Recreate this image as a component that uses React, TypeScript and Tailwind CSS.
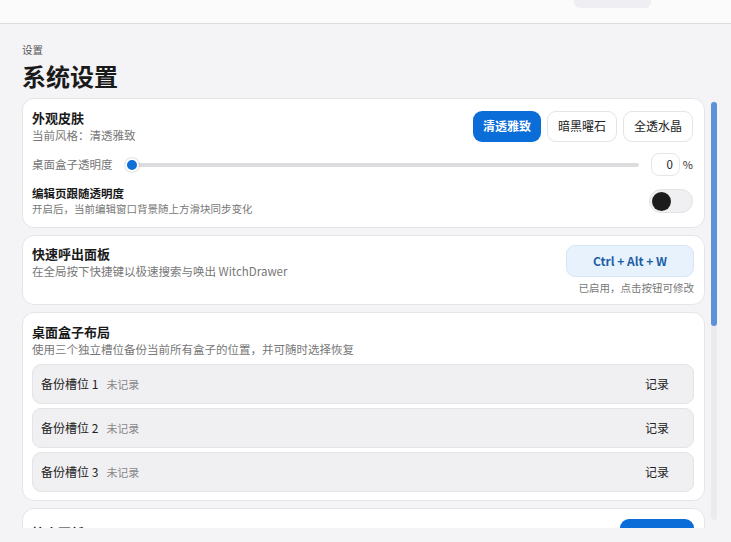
import React from "react";

const font = { fontFamily: '"Noto Sans CJK SC", "Noto Sans", sans-serif' };

function SkinButton({ label, active }: { label: string; active?: boolean }) {
  return (
    <button
      className={
        active
          ? "h-[31px] px-[10px] rounded-[9px] bg-[#0b6dd7] text-white text-[12px] font-bold leading-none"
          : "h-[31px] px-[10px] rounded-[9px] bg-white border border-[#e4e4e7] text-[#222] text-[12px] leading-none"
      }
    >
      {label}
    </button>
  );
}

function Slot({ n }: { n: number }) {
  return (
    <div className="h-[40px] rounded-[9px] bg-[#f0f0f3] border border-[#e4e4e8] flex items-center pl-[8px] pr-[12px]">
      <span className="text-[12px] text-[#222]">备份槽位 {n}</span>
      <span className="ml-[8px] text-[11px] text-[#888]">未记录</span>
      <button className="ml-auto px-[12px] text-[12px] text-[#222]">记录</button>
    </div>
  );
}

export default function App() {
  return (
    <div className="w-[731px] h-[542px] bg-[#f4f4f6] overflow-hidden flex flex-col" style={font}>
      <div className="h-[24px] shrink-0 bg-[#fbfbfb] border-b border-[#dcdcdf] flex">
        <div className="ml-[574px] w-[77px] h-[8px] bg-[#efeff3] rounded-b-[6px]" />
      </div>
      <div className="flex-1 flex flex-col pl-[22px] pt-[19px]">
        <div className="text-[10.5px] leading-[14px] text-[#555]">设置</div>
        <div className="mt-[5px] text-[24px] leading-[28px] font-bold text-[#1a1a1a]">系统设置</div>
        <div className="mt-[8px] h-[430px] flex">
          <div className="w-[683px] shrink-0 overflow-hidden flex flex-col gap-[7px]">
            {/* card 1 */}
            <div className="shrink-0 bg-white border border-[#e5e5e8] rounded-[12px] pl-[9px] pr-[11px] pt-[10px] pb-[10px]">
              <div className="flex items-center">
                <div className="flex flex-col">
                  <div className="text-[13px] leading-[18px] font-bold text-[#1a1a1a]">外观皮肤</div>
                  <div className="text-[11.5px] leading-[16px] text-[#777]">当前风格：清透雅致</div>
                </div>
                <div className="ml-auto flex gap-[6px]">
                  <SkinButton label="清透雅致" active />
                  <SkinButton label="暗黑曜石" />
                  <SkinButton label="全透水晶" />
                </div>
              </div>
              <div className="mt-[10px] flex items-center h-[23px]">
                <span className="text-[11.5px] text-[#777]">桌面盒子透明度</span>
                <div className="ml-[13px] flex-1 relative h-[4px] bg-[#dcdcdf] rounded-full">
                  <div className="absolute left-[-1px] top-[-5px] w-[14px] h-[14px] rounded-full bg-[#0d6fd8] border-2 border-white shadow-[0_0_2px_rgba(0,0,0,0.35)]" />
                </div>
                <div className="ml-[12px] w-[29px] h-[23px] rounded-[8px] border border-[#e6e6e9] bg-white flex items-center justify-end pr-[6px] text-[11.5px] text-[#222]">
                  0
                </div>
                <span className="ml-[3px] text-[11px] text-[#333]">%</span>
              </div>
              <div className="mt-[9px] flex items-center">
                <div className="flex flex-col">
                  <div className="text-[11.5px] leading-[16px] font-semibold text-[#1a1a1a]">编辑页跟随透明度</div>
                  <div className="text-[10.5px] leading-[16px] text-[#777]">开启后，当前编辑窗口背景随上方滑块同步变化</div>
                </div>
                <div className="ml-auto w-[44px] h-[24px] rounded-full bg-[#f0f0f2] border border-[#e2e2e5] flex items-center pl-[2px]">
                  <div className="w-[19px] h-[19px] rounded-full bg-[#1c1c1c]" />
                </div>
              </div>
            </div>
            {/* card 2 */}
            <div className="shrink-0 bg-white border border-[#e5e5e8] rounded-[12px] pl-[9px] pr-[10px] pt-[9px] pb-[8px] flex items-start">
              <div className="flex flex-col">
                <div className="text-[13px] leading-[18px] font-bold text-[#1a1a1a]">快速呼出面板</div>
                <div className="text-[11.5px] leading-[16px] text-[#777]">在全局按下快捷键以极速搜索与唤出 WitchDrawer</div>
              </div>
              <div className="ml-auto flex flex-col items-end">
                <button className="w-[128px] h-[32px] rounded-[9px] bg-[#e8f2fd] border border-[#d5e5f7] text-[12px] font-bold text-[#1b5ea6]">
                  Ctrl + Alt + W
                </button>
                <div className="mt-[3px] text-[10.5px] leading-[16px] text-[#777]">已启用，点击按钮可修改</div>
              </div>
            </div>
            {/* card 3 */}
            <div className="shrink-0 bg-white border border-[#e5e5e8] rounded-[12px] pl-[9px] pr-[10px] pt-[10px] pb-[8px]">
              <div className="text-[13px] leading-[18px] font-bold text-[#1a1a1a]">桌面盒子布局</div>
              <div className="text-[11.5px] leading-[16px] text-[#777]">使用三个独立槽位备份当前所有盒子的位置，并可随时选择恢复</div>
              <div className="mt-[7px] flex flex-col gap-[4px]">
                <Slot n={1} />
                <Slot n={2} />
                <Slot n={3} />
              </div>
            </div>
            {/* card 4 */}
            <div className="shrink-0 bg-white border border-[#e5e5e8] rounded-[12px] pl-[9px] pr-[10px] pt-[10px] pb-[10px] flex items-start">
              <div className="flex flex-col pt-[5px]">
                <div className="text-[13px] leading-[18px] font-bold text-[#1a1a1a]">检查更新</div>
              </div>
              <button className="ml-auto w-[74px] h-[31px] rounded-[9px] bg-[#0b6dd7] text-white text-[12px] font-bold">检查</button>
            </div>
          </div>
          <div className="ml-[6px] mt-[3px] w-[6px] h-[419px] shrink-0 rounded-full bg-[#ebebee] flex flex-col">
            <div className="mt-[1px] w-[6px] h-[224px] rounded-full bg-[#5c93d8]" />
          </div>
        </div>
      </div>
    </div>
  );
}
